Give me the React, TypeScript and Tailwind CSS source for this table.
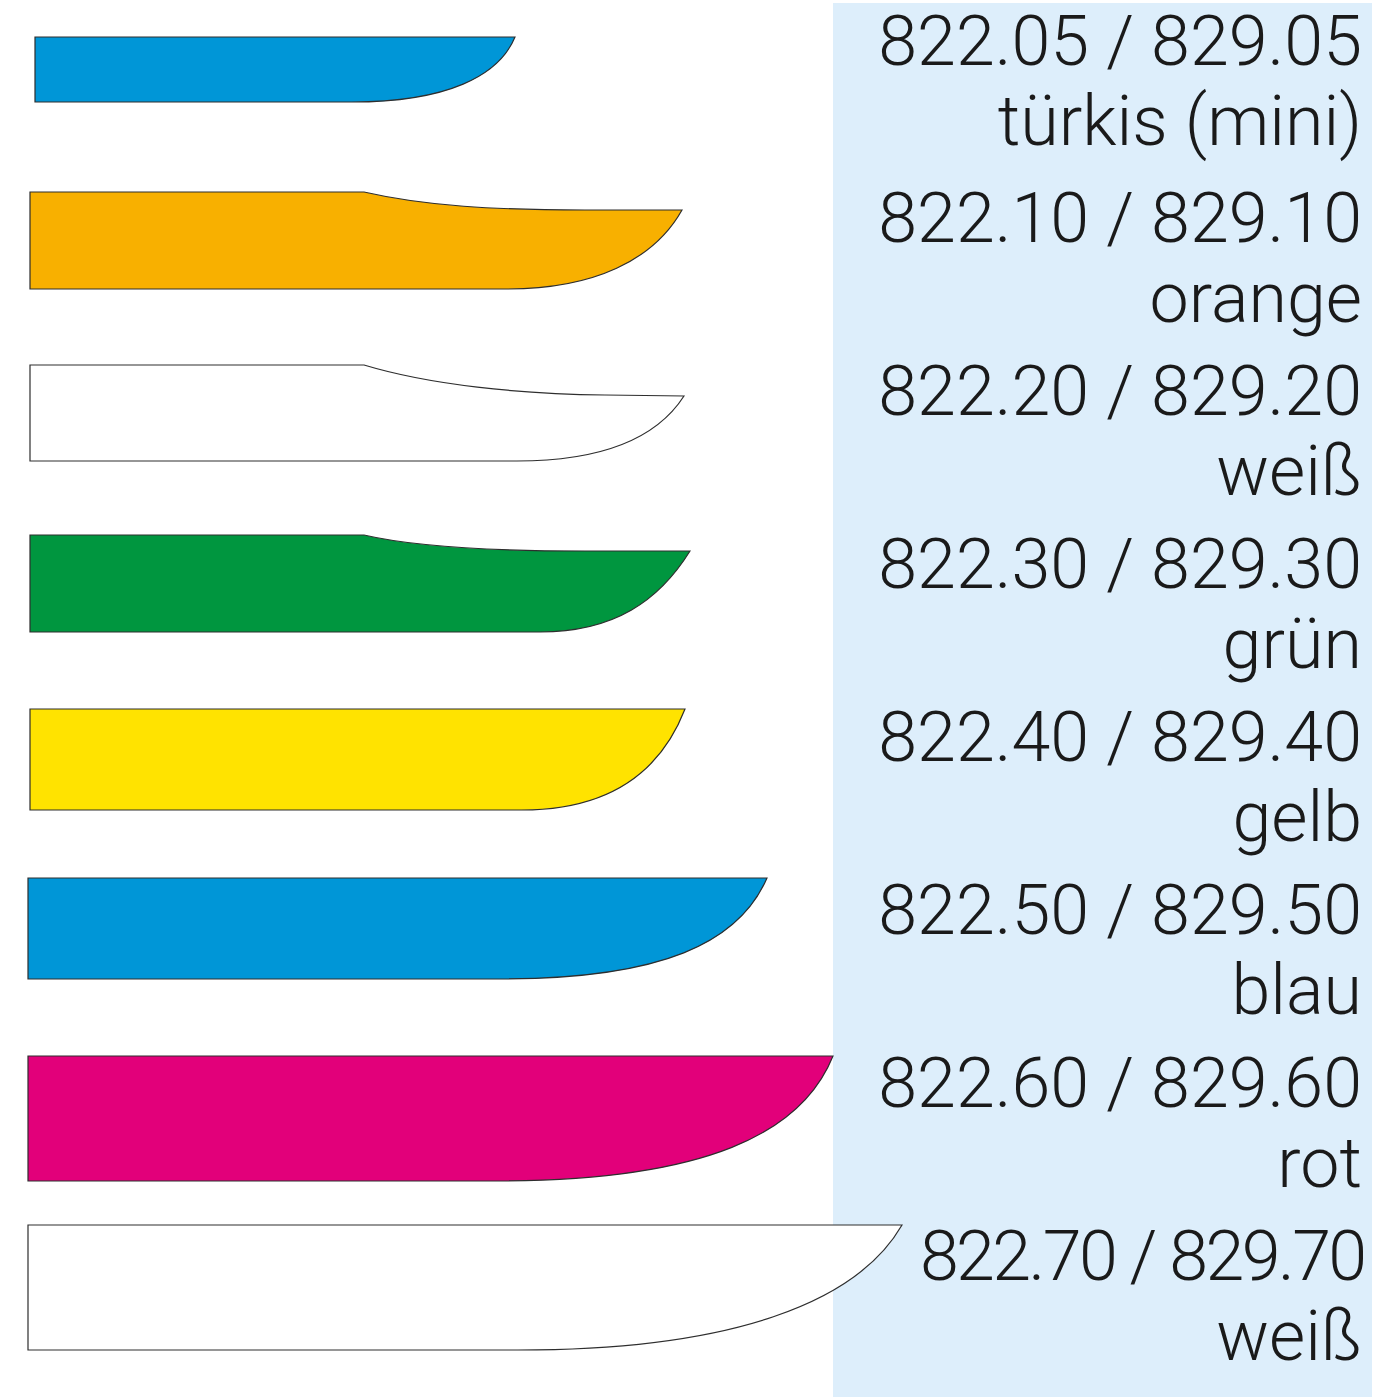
import React from "react";

type Knife = {
  d: string;
  top: number;
  h: number;
  fill: string;
  gap: string;
};

// blade outlines, in page coordinates
const knives: Knife[] = [
  { d: "M35,37 H515 C499,76 447,102 352,102 H35 Z", top: 37, h: 65, fill: "#0096d7", gap: "mt-[36px]" },
  { d: "M30,192 H364 C425,206 495,210 585,210 H682 C654,260 594,289 507,289 H30 Z", top: 192, h: 97, fill: "#f8b000", gap: "mt-[88px]" },
  { d: "M30,365 H364 C430,385 520,394 605,395 L684,396 C657,438 604,461 517,461 H30 Z", top: 365, h: 96, fill: "#ffffff", gap: "mt-[74px]" },
  { d: "M30,535 H364 C420,548 500,551 585,551 H690 C659,601 614,632 540,632 H30 Z", top: 535, h: 97, fill: "#00963f", gap: "mt-[72px]" },
  { d: "M30,709 H685 C664,763 620,810 522,810 H30 Z", top: 709, h: 101, fill: "#ffe300", gap: "mt-[75px]" },
  { d: "M28,878 H767 C739,943 662,979 500,979 H28 Z", top: 878, h: 101, fill: "#0096d7", gap: "mt-[66px]" },
  { d: "M28,1056 H833 C802,1133 707,1181 495,1181 H28 Z", top: 1056, h: 125, fill: "#e2007a", gap: "mt-[75px]" },
  { d: "M28,1225 H902 C857,1303 732,1350 518,1350 H28 Z", top: 1225, h: 125, fill: "#ffffff", gap: "mt-[42px]" },
];

const labels = [
  { code: "822.05 / 829.05", color: "türkis (mini)" },
  { code: "822.10 / 829.10", color: "orange" },
  { code: "822.20 / 829.20", color: "weiß" },
  { code: "822.30 / 829.30", color: "grün" },
  { code: "822.40 / 829.40", color: "gelb" },
  { code: "822.50 / 829.50", color: "blau" },
  { code: "822.60 / 829.60", color: "rot" },
  { code: "822.70 / 829.70", color: "weiß" },
];

const KnifeShape = ({ k }: { k: Knife }) => (
  <svg
    className={`relative z-10 block shrink-0 overflow-visible ${k.gap}`}
    width={920}
    height={k.h + 2}
    viewBox={`0 ${k.top - 1} 920 ${k.h + 2}`}
  >
    <path d={k.d} fill={k.fill} stroke="#2e2e2e" strokeWidth={1.2} />
  </svg>
);

export default function App() {
  return (
    <div className="flex w-[1400px] h-[1400px] bg-white overflow-hidden font-['Roboto',Arial,sans-serif] font-light text-[#1a1a1a]">
      <div className="w-[833px] shrink-0 flex flex-col">
        {knives.map((k, i) => (
          <KnifeShape key={i} k={k} />
        ))}
      </div>

      <div className="w-[539px] shrink-0 mt-[3px] h-[1394px] bg-[#ddeefb] pr-[10px] flex flex-col gap-[13px] text-right text-[70px] leading-[80px]">
        {labels.map((l, i) => (
          <div key={i} className={i === 0 ? "-mt-[2px] mb-[4px]" : ""}>
            <p className={i === 7 ? "tracking-[-2.6px] mr-[-2.6px]" : ""}>{l.code}</p>
            <p>{l.color}</p>
          </div>
        ))}
      </div>
    </div>
  );
}
